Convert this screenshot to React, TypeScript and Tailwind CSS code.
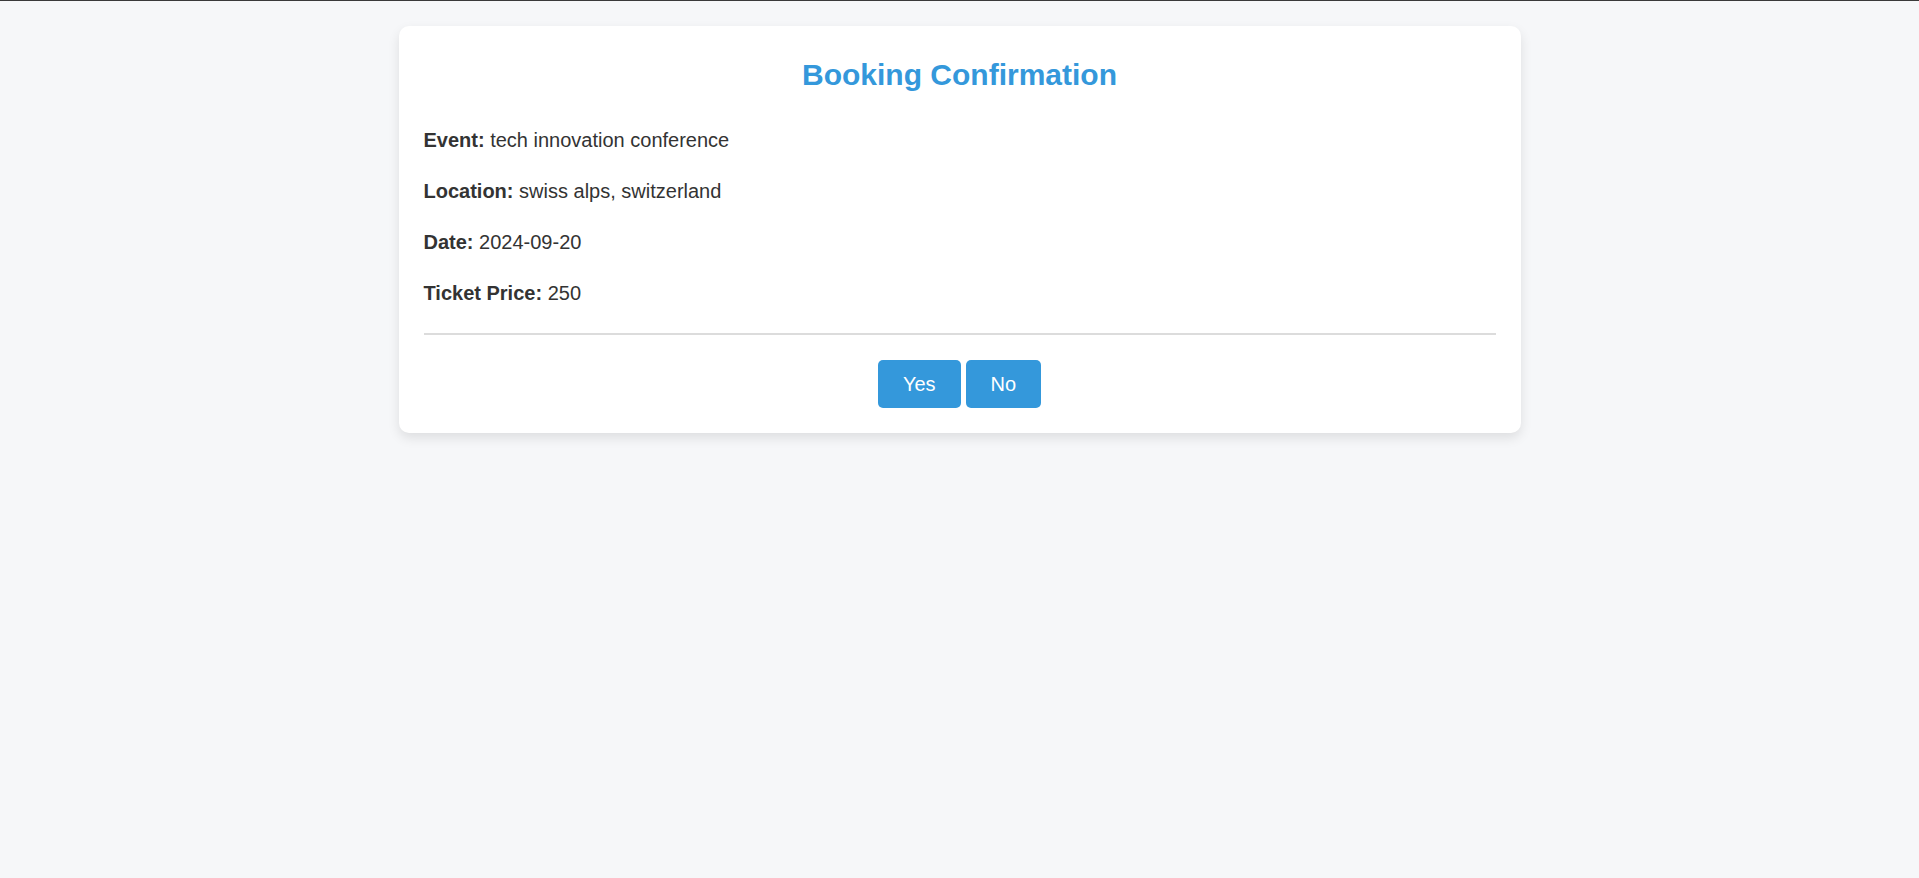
import React from "react";

const details = [
  { label: "Event:", value: "tech innovation conference" },
  { label: "Location:", value: "swiss alps, switzerland" },
  { label: "Date:", value: "2024-09-20" },
  { label: "Ticket Price:", value: "250" },
];

export default function App() {
  return (
    <div className="min-h-screen bg-[#f6f7f9] font-['Liberation_Sans',Arial,sans-serif] text-[#333]">
      <div className="h-px bg-[#3a3a3a]" />

      <div className="pt-[25px]">
        {/* Card */}
        <div className="w-[1122px] mx-auto bg-white rounded-[10px] p-[25px] shadow-[0_5px_12px_rgba(0,0,0,0.1)]">
          <h2 className="text-center text-[30px] leading-[48px] font-bold text-[#3498db] mb-[25px]">
            Booking Confirmation
          </h2>

          <div className="flex flex-col gap-[19px]">
            {details.map((d) => (
              <p key={d.label} className="text-[20px] leading-[32px]">
                <strong className="font-bold">{d.label}</strong> {d.value}
              </p>
            ))}
          </div>

          <div className="mt-[24px] h-[2px] bg-[#dcdcdc]" />

          <div className="pt-[25px] flex justify-center gap-[5px]">
            <button className="px-[25px] py-[12.5px] bg-[#3498db] text-white text-[20px] leading-[23px] rounded-[5px]">
              Yes
            </button>
            <button className="px-[25px] py-[12.5px] bg-[#3498db] text-white text-[20px] leading-[23px] rounded-[5px]">
              No
            </button>
          </div>
        </div>
      </div>
    </div>
  );
}
